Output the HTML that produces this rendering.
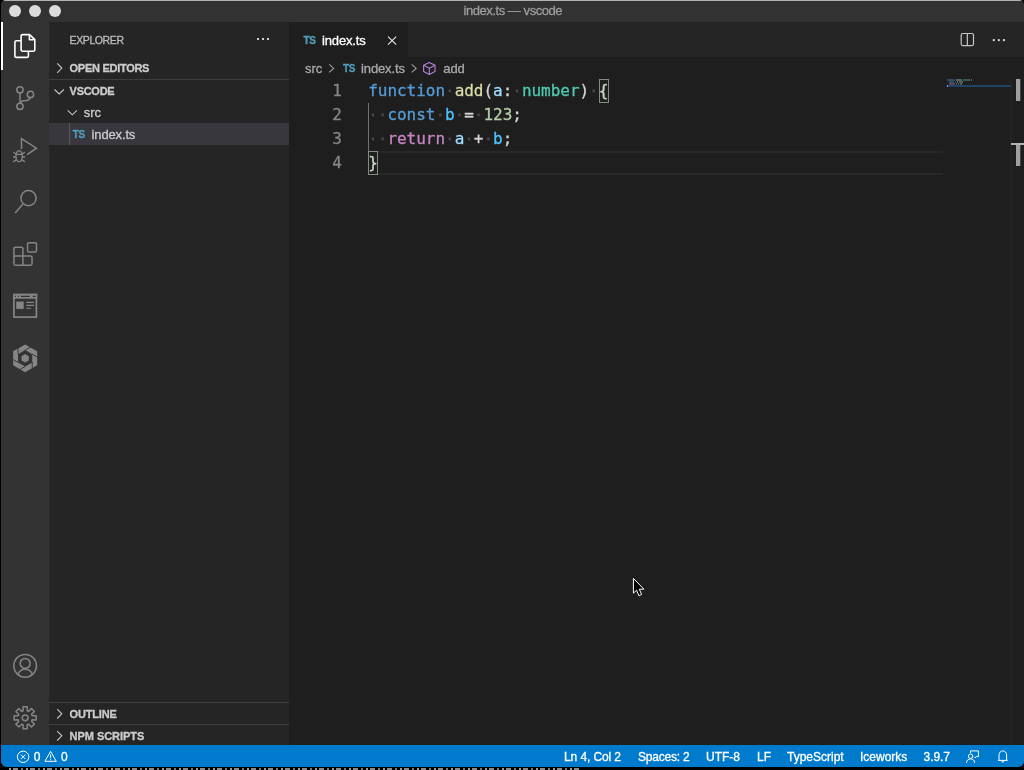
<!DOCTYPE html>
<html>
<head>
<meta charset="utf-8">
<title>index.ts — vscode</title>
<style>
*{box-sizing:border-box;margin:0;padding:0}
html,body{width:1024px;height:770px;overflow:hidden;background:#000}
body{font-family:"Liberation Sans",sans-serif;font-size:13px;color:#ccc;position:relative;-webkit-text-stroke:0.3px}
.abs{position:absolute}
#win{will-change:transform;position:absolute;left:1px;top:0;width:1023px;height:767px;background:#1e1e1e;border-radius:5px 5px 6px 6px;overflow:hidden}
#title{position:absolute;left:0;top:0;width:100%;height:22px;background:#323233;border-top:1px solid #b2b2b2}
#title .t{position:absolute;left:0.3px;width:100%;top:-1px;height:21px;line-height:21px;text-align:center;font-size:13px;color:#9d9d9d;letter-spacing:-0.45px}
.dot{position:absolute;top:4.3px;width:12px;height:12px;border-radius:50%;background:#dcdcdc}
#act{position:absolute;left:0;top:22px;width:48px;height:723px;background:#333333}
#side{position:absolute;left:48px;top:22px;width:240px;height:723px;background:#252526}
#tabs{position:absolute;left:288px;top:22px;width:735px;height:35px;background:#252526}
#tab{position:absolute;left:0;top:0;width:119px;height:35px;background:#1e1e1e}
#crumbs{position:absolute;left:288px;top:57px;width:735px;height:22px;background:#1e1e1e;color:#a9a9a9;font-size:13px}
#editor{position:absolute;left:288px;top:79px;width:735px;height:666px;background:#1e1e1e}
#status{position:absolute;left:0;top:745px;width:1023px;height:22px;background:#007acc;color:#fff;font-size:12px}
.hdr{position:absolute;left:0;width:240px;height:22px;line-height:22px;font-size:11px;font-weight:bold;color:#ccc}
.hdr span{position:absolute;left:20.6px;letter-spacing:-0.28px}
.row{position:absolute;left:0;width:240px;height:22px;line-height:22px;font-size:13px;color:#ccc}
.code{-webkit-text-stroke:0.3px;position:absolute;left:79.2px;letter-spacing:-0.03px;font-family:"DejaVu Sans Mono","Liberation Mono",monospace;font-size:16px;line-height:24px;height:24px;white-space:pre;color:#d4d4d4}
.ln{-webkit-text-stroke:0.3px;position:absolute;left:0;width:53px;text-align:right;font-family:"DejaVu Sans Mono","Liberation Mono",monospace;font-size:16px;line-height:24px;height:24px;color:#858585}
.k{color:#569cd6}.f{color:#dcdcaa}.v{color:#9cdcfe}.t{color:#4ec9b0}.n{color:#b5cea8}.c{color:#c586c0}
.ws{color:#494949;-webkit-text-stroke:0.35px}
.sb{position:absolute;top:1px;height:22px;line-height:22px;white-space:nowrap}
</style>
</head>
<body>
<div id="win">
  <div id="title">
    <div class="dot" style="left:8px"></div>
    <div class="dot" style="left:28px"></div>
    <div class="dot" style="left:48px"></div>
    <div class="t">index.ts — vscode</div>
  </div>

  <div id="act">
    <div class="abs" style="left:0;top:0;width:2px;height:48px;background:#fff"></div>
    <svg class="abs" style="left:0;top:0" width="48" height="723" viewBox="1 22 48 723" fill="none" stroke="#858585" stroke-width="1.5">
      <g stroke="#fff" stroke-width="1.6" stroke-linejoin="round">
        <path d="M22.6 34.6H29.6L34.8 39.6V49.7a1.5 1.5 0 0 1-1.5 1.5H22.6a1.5 1.5 0 0 1-1.5-1.5V36.1a1.5 1.5 0 0 1 1.5-1.5Z"/>
        <path d="M29.4 34.8V39.8H34.6"/>
        <path d="M21.1 40.8H16.4a1.5 1.5 0 0 0-1.5 1.5V55.9a1.5 1.5 0 0 0 1.5 1.5H26.9a1.5 1.5 0 0 0 1.5-1.5V51.2"/>
      </g>
      <g>
        <circle cx="19.96" cy="89.8" r="3.15"/><circle cx="30.45" cy="94.4" r="3.15"/><circle cx="19.96" cy="106.3" r="3.15"/>
        <path d="M19.96 92.95V103.15"/>
        <path d="M30.2 97.6C29.6 100.6 26.5 100.6 24 100.7C21.8 100.8 20.6 101.8 20.3 103.1"/>
      </g>
      <g>
        <path d="M21.5 149V138.6L36.4 148.2L27.1 154.7"/>
        <ellipse cx="19.1" cy="156.2" rx="3.2" ry="5.4" stroke-width="1.4"/>
        <path d="M16 154.4H22.2" stroke-width="1.3"/>
        <path d="M13.3 152L15.9 153.9M13 157H15.8M13.3 161.9L16.1 159.9M24.9 152L22.3 153.9M25.2 157H22.4M24.9 161.9L22.1 159.9" stroke-width="1.3"/>
      </g>
      <g>
        <circle cx="28.5" cy="198.2" r="7.6"/>
        <path d="M22.9 204.1L15.2 213.1"/>
      </g>
      <g stroke-linejoin="round">
        <rect x="27.55" y="242.8" width="8.9" height="9.15" rx="1.3"/>
        <path d="M15.25 247.25H21.6a1.3 1.3 0 0 1 1.3 1.3V256.1H30.75a1.3 1.3 0 0 1 1.3 1.3V263.85a1.3 1.3 0 0 1-1.3 1.3H15.25a1.3 1.3 0 0 1-1.3-1.3V248.55a1.3 1.3 0 0 1 1.3-1.3Z"/>
        <path d="M13.95 256.1H22.9V265.15"/>
      </g>
      <g>
        <rect x="13.9" y="294.6" width="22.5" height="22.5" stroke-width="1.7"/>
        <rect x="13.05" y="293.8" width="24.15" height="4.9" fill="#858585" stroke="none"/>
        <path d="M14.9 296.4H16M18 296.4H19.1M21 296.4H29.7M32.8 296.4H35.6" stroke="#333" stroke-width="1.1"/>
        <rect x="16.2" y="301.6" width="7.5" height="7.3" fill="#858585" stroke="none"/>
        <path d="M26.3 302.4H34M26.3 305.4H34M26.3 308.3H31" stroke-width="1.1"/>
      </g>
      <g stroke="none">
        <path fill-rule="evenodd" fill="#858585" d="M25.15 344.40 L37.19 351.35 L37.19 365.25 L25.15 372.20 L13.11 365.25 L13.11 351.35Z M18.05 354.20 L18.05 362.40 L25.15 366.50 L32.25 362.40 L32.25 354.20 L25.15 350.10Z"/>
        <path fill="#858585" d="M25.15 354.10 L28.79 356.20 L28.79 360.40 L25.15 362.50 L21.51 360.40 L21.51 356.20Z"/>
        <path d="M24.89 350.25 L32.94 345.60 M31.99 354.05 L40.05 358.70 M32.25 362.10 L32.25 371.40 M25.41 366.35 L17.36 371.00 M18.31 362.55 L10.25 357.90 M18.05 354.50 L18.05 345.20" stroke="#333" stroke-width="0.9"/>
      </g>
      <g>
        <circle cx="25.15" cy="665.85" r="11.35"/>
        <circle cx="25.15" cy="663.4" r="4.95"/>
        <path d="M17.9 674.3C19.2 670.9 22 669.2 25.15 669.2C28.3 669.2 31.1 670.9 32.4 674.3"/>
      </g>
      <g stroke-linejoin="round">
        <path d="M23.08 710.80 L23.05 706.80 L27.25 706.80 L27.22 710.80 L28.63 711.38 L31.45 708.54 L34.41 711.50 L31.57 714.32 L32.15 715.73 L36.15 715.70 L36.15 719.90 L32.15 719.87 L31.57 721.28 L34.41 724.10 L31.45 727.06 L28.63 724.22 L27.22 724.80 L27.25 728.80 L23.05 728.80 L23.08 724.80 L21.67 724.22 L18.85 727.06 L15.89 724.10 L18.73 721.28 L18.15 719.87 L14.15 719.90 L14.15 715.70 L18.15 715.73 L18.73 714.32 L15.89 711.50 L18.85 708.54 L21.67 711.38Z"/>
        <circle cx="25.15" cy="717.8" r="2.9"/>
      </g>
    </svg>
  </div>

  <div id="side">
    <div class="abs" style="left:20.6px;top:1px;height:35px;line-height:35px;font-size:10.5px;letter-spacing:-0.4px;color:#bbb">EXPLORER</div>
    <svg class="abs" style="left:0;top:0" width="240" height="723" viewBox="49 22 240 723" fill="none" stroke="#c5c5c5" stroke-width="1.1">
      <path d="M57.2 63.4L61.8 68.1L57.2 72.8"/>
      <path d="M54.5 89.5L59.2 93.9L63.9 89.5"/>
      <path d="M67.7 110.4L72.3 114.8L76.9 110.4"/>
      <path d="M57.2 709.1L61.8 713.8L57.2 718.5"/>
      <path d="M57.2 731.1L61.8 735.8L57.2 740.5"/>
      <g fill="#d0d0d0" stroke="none"><rect x="257" y="38" width="2" height="2"/><rect x="262" y="38" width="2" height="2"/><rect x="267" y="38" width="2" height="2"/></g>
    </svg>
    <div class="hdr" style="top:35px"><span>OPEN EDITORS</span></div>
    <div class="abs" style="left:0;top:57px;width:240px;height:1px;background:#3f3f40"></div>
    <div class="hdr" style="top:58px"><span>VSCODE</span></div>
    <div class="row" style="top:79px"><span class="abs" style="left:34.7px;top:0.5px">src</span></div>
    <div class="row" style="top:101px;background:#37373d"><span class="abs" style="left:23.8px;top:0.8px;font-size:10px;letter-spacing:-0.3px;color:#519aba;font-weight:bold">TS</span><span class="abs" style="left:42.6px;top:0.5px;letter-spacing:-0.15px">index.ts</span>
      <div class="abs" style="left:20px;top:0;width:1px;height:22px;background:#585858"></div>
    </div>
    <div class="abs" style="left:0;top:680px;width:240px;height:1px;background:#3f3f40"></div>
    <div class="hdr" style="top:681px"><span style="letter-spacing:-0.18px">OUTLINE</span></div>
    <div class="abs" style="left:0;top:702px;width:240px;height:1px;background:#3f3f40"></div>
    <div class="hdr" style="top:703px"><span style="letter-spacing:-0.05px">NPM SCRIPTS</span></div>
  </div>

  <div id="tabs">
    <div id="tab">
      <span class="abs" style="left:14.5px;top:0.8px;line-height:35px;font-size:10px;letter-spacing:-0.3px;color:#519aba;font-weight:bold">TS</span>
      <span class="abs" style="left:33px;top:0.5px;line-height:35px;font-size:13px;letter-spacing:-0.15px;color:#fff">index.ts</span>
    </div>
    <svg class="abs" style="left:0;top:0" width="735" height="35" viewBox="289 22 735 35" fill="none" stroke="#e8e8e8" stroke-width="1.1">
      <path d="M388 36.6L396.2 44.6M396.2 36.6L388 44.6"/>
      <g stroke="#c5c5c5" stroke-width="1.2"><rect x="961.2" y="33.5" width="12.3" height="12.1" rx="1.5"/><path d="M967.35 33.5V45.6"/></g>
      <g fill="#d8d8d8" stroke="none"><rect x="992.8" y="39.1" width="2" height="2"/><rect x="997.8" y="39.1" width="2" height="2"/><rect x="1002.9" y="39.1" width="2" height="2"/></g>
    </svg>
  </div>

  <div id="crumbs">
    <span class="abs" style="left:16px;top:0.5px;line-height:22px">src</span>
    <span class="abs" style="left:54px;top:1.2px;line-height:22px;font-size:10px;letter-spacing:-0.3px;color:#519aba;font-weight:bold">TS</span>
    <span class="abs" style="left:72px;top:0.5px;line-height:22px;letter-spacing:-0.12px">index.ts</span>
    <span class="abs" style="left:154.3px;top:0.5px;line-height:22px;letter-spacing:-0.1px">add</span>
    <svg class="abs" style="left:0;top:0" width="735" height="22" viewBox="289 57 735 22" fill="none" stroke="#a0a0a0" stroke-width="1.1">
      <path d="M329.2 64.4L333.7 68.4L329.2 72.4"/>
      <path d="M411.7 64.4L416.2 68.4L411.7 72.4"/>
      <g stroke="#b180d7" stroke-width="1.1" stroke-linejoin="round"><path d="M429.3 62.5L435 65.3V71.6L429.3 74.4L423.6 71.6V65.3Z"/><path d="M423.6 65.3L429.3 68.2L435 65.3M429.3 68.2V74.4"/></g>
    </svg>
  </div>

  <div id="editor">
    <div class="ln" style="top:0">1</div>
    <div class="ln" style="top:24px">2</div>
    <div class="ln" style="top:48px">3</div>
    <div class="ln" style="top:72px">4</div>
    <div class="abs" style="left:80px;top:72px;width:574px;height:24px;border-top:2px solid #282828;border-bottom:2px solid #282828"></div>
    <div class="abs" style="left:79px;top:24px;width:1px;height:48px;background:#707070"></div>
    <div class="abs" style="left:310px;top:0;width:10px;height:24px;border:1px solid #888;background:#1b231b"></div>
    <div class="abs" style="left:79px;top:72px;width:10px;height:24px;border:1px solid #888;background:#1b231b"></div>
    <svg class="abs" style="left:0;top:0" width="735" height="666" viewBox="289 79 735 666">
      <g opacity="0.55">
        <rect x="947" y="79" width="8" height="2" fill="#3d6f99"/><rect x="956" y="79" width="3" height="2" fill="#9d9d7a"/><rect x="959" y="79" width="3" height="2" fill="#6e9bb5"/><rect x="963" y="79" width="6" height="2" fill="#38907f"/><rect x="969" y="79" width="1" height="2" fill="#999"/><rect x="971" y="79" width="1" height="2" fill="#999"/>
        <rect x="949" y="81" width="5" height="2" fill="#3d6f99"/><rect x="955" y="81" width="1" height="2" fill="#3a8bb8"/><rect x="957" y="81" width="1" height="2" fill="#999"/><rect x="959" y="81" width="3" height="2" fill="#82947a"/><rect x="962" y="81" width="1" height="2" fill="#999"/>
        <rect x="949" y="83" width="6" height="2" fill="#8e6189"/><rect x="956" y="83" width="1" height="2" fill="#6e9bb5"/><rect x="958" y="83" width="1" height="2" fill="#999"/><rect x="960" y="83" width="1" height="2" fill="#3a8bb8"/><rect x="961" y="83" width="1" height="2" fill="#999"/>
      </g>
      <rect x="946.5" y="85" width="64.5" height="2" fill="#1f4366"/>
      <rect x="947" y="85" width="1" height="2" fill="#7a98b0"/>
      <rect x="1010.5" y="79" width="1" height="666" fill="#2b2b2b"/>
      <rect x="1016" y="79" width="4.3" height="22" fill="#a0a0a0"/>
      <rect x="1016" y="143" width="4.3" height="23" fill="#a0a0a0"/>
      <rect x="1011" y="143" width="13" height="2" fill="#b4b4b4"/>
      <path d="M633.4 578.4V593.1L636.6 590.2L638.9 595.7L641.6 594.5L639.3 589.2H643.9Z" fill="#000" stroke="#fff" stroke-width="1" stroke-linejoin="miter"/>
    </svg>
    <div class="code" style="top:0"><span class="k">function</span><span class="ws">·</span><span class="f">add</span>(<span class="v">a</span>:<span class="ws">·</span><span class="t">number</span>)<span class="ws">·</span>{</div>
    <div class="code" style="top:24px"><span class="ws">··</span><span class="k">const</span><span class="ws">·</span><span class="v" style="color:#4fc1ff">b</span><span class="ws">·</span>=<span class="ws">·</span><span class="n">123</span>;</div>
    <div class="code" style="top:48px"><span class="ws">··</span><span class="c">return</span><span class="ws">·</span><span class="v">a</span><span class="ws">·</span>+<span class="ws">·</span><span class="v" style="color:#4fc1ff">b</span>;</div>
    <div class="code" style="top:72px">}</div>
  </div>

  <div id="status">
    <svg class="abs" style="left:0;top:0" width="1023" height="22" viewBox="1 745 1023 22" fill="none" stroke="#fff" stroke-width="1">
      <circle cx="23.1" cy="756.8" r="5.7"/><path d="M20.9 754.6L25.3 759M25.3 754.6L20.9 759"/>
      <path d="M50.6 751.4L56.3 761.3H44.9Z" stroke-linejoin="round"/><path d="M50.6 754.6V758.3M50.6 759.2V760.2"/>
      <path d="M970.5 753V750.9H978.4V756.6H976.4L975 758V756.6" stroke-linejoin="round"/>
      <circle cx="970.6" cy="756.2" r="2.2"/><path d="M966.5 762.8C966.5 760.3 968.3 758.9 970.6 758.9C972.9 758.9 974.7 760.3 974.7 762.8"/>
      <path d="M998 760.4H1007.6M999 760.4V755C999 752.6 1000.7 750.9 1002.8 750.9C1004.9 750.9 1006.6 752.6 1006.6 755V760.4M1001.7 760.6C1001.7 761.6 1002.2 762.1 1002.8 762.1C1003.4 762.1 1003.9 761.6 1003.9 760.6"/>
    </svg>
    <span class="sb" style="left:32.7px">0</span>
    <span class="sb" style="left:60px">0</span>
    <span class="sb" style="left:563px;letter-spacing:-0.1px">Ln 4, Col 2</span>
    <span class="sb" style="left:637px;letter-spacing:-0.2px">Spaces: 2</span>
    <span class="sb" style="left:705px">UTF-8</span>
    <span class="sb" style="left:756px">LF</span>
    <span class="sb" style="left:786px">TypeScript</span>
    <span class="sb" style="left:859px">Iceworks</span>
    <span class="sb" style="left:922.6px;letter-spacing:-0.1px">3.9.7</span>
  </div>
</div>
<div class="abs" style="left:9px;top:768px;width:572px;height:2px;background:repeating-linear-gradient(90deg,#9a9a9a 0 2px,#000 2px 4px,#8a8a8a 4px 9px,#000 9px 12px,#777 12px 14px,#000 14px 17px)"></div>
</body>
</html>
